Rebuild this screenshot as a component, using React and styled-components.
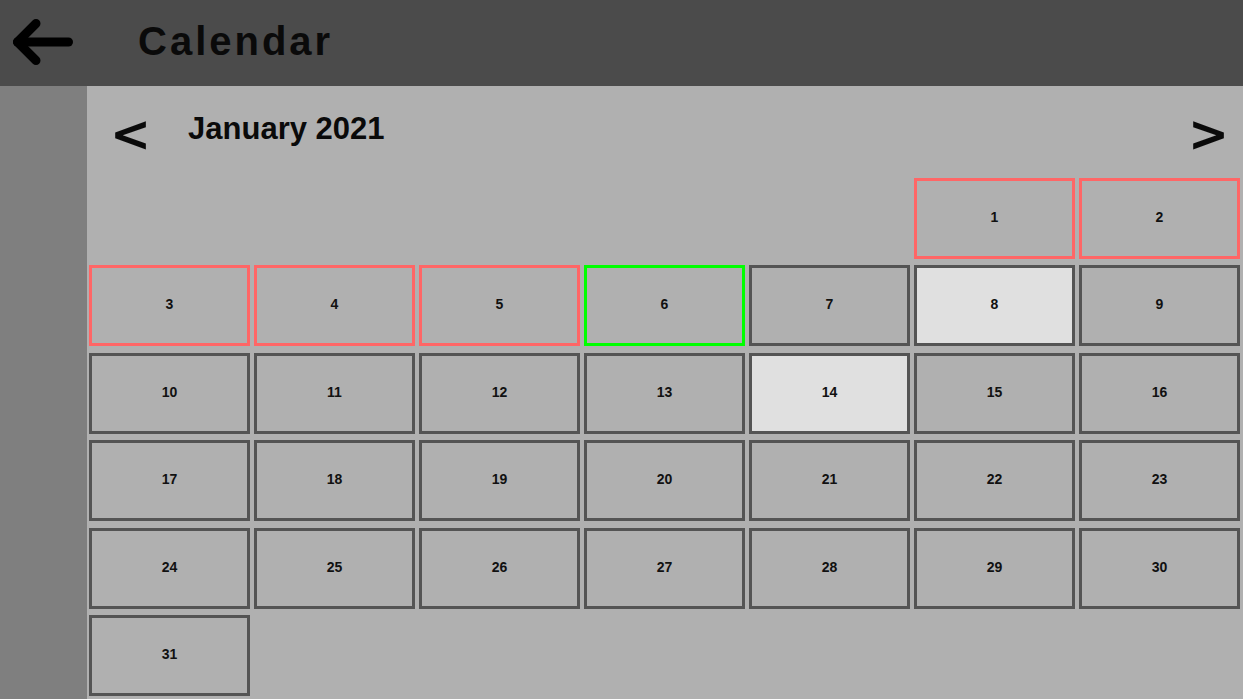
import React from 'react';
import styled, { createGlobalStyle } from 'styled-components';

const GlobalStyle = createGlobalStyle`
    html, body {
        margin: 0;
        padding: 0;
        height: 100%;
        overflow: hidden;
    }
    body {
        font-family: "Liberation Sans", Arial, sans-serif;
        color: #111;
    }
`;

const colors = {
    header: '#4b4b4b',
    sidebar: '#7f7f7f',
    main: '#b0b0b0',
    border: '#545454',
    busy: '#ff6666',
    today: '#00ff00',
    light: '#e0e0e0',
};

const Page = styled('div')`
    display: flex;
    flex-direction: column;
    width: 100vw;
    height: 100vh;
`;
const Header = styled('header')`
    display: flex;
    align-items: flex-start;
    height: 86px;
    flex-shrink: 0;
    background-color: ${colors.header};
`;
const BackButton = styled('button')`
    display: block;
    border: none;
    background: none;
    padding: 0;
    margin: 19px 0 0 13px;
    cursor: pointer;
    svg{
        display: block;
    }
`;
const Title = styled('h1')`
    margin: 21px 0 0 65px;
    font-size: 40px;
    line-height: 40px;
    font-weight: 700;
    letter-spacing: 3px;
    color: #0a0a0a;
`;
const Body = styled('div')`
    display: flex;
    flex: 1;
    min-height: 0;
`;
const Sidebar = styled('aside')`
    width: 87px;
    flex-shrink: 0;
    background-color: ${colors.sidebar};
`;
const Main = styled('main')`
    flex: 1;
    display: flex;
    flex-direction: column;
    background-color: ${colors.main};
`;
const MonthBar = styled('div')`
    display: flex;
    align-items: flex-start;
    height: 89px;
    padding: 0 14px 0 23px;
`;
const NavButton = styled('button')`
    border: none;
    background: none;
    padding: 0;
    margin-top: 24px;
    font-family: "DejaVu Sans", sans-serif;
    font-weight: 700;
    font-size: 49px;
    line-height: 49px;
    color: #0a0a0a;
    cursor: pointer;
    ${p => p.right && `margin-left: auto;`}
`;
const MonthTitle = styled('h2')`
    margin: 27px 0 0 37px;
    font-size: 31px;
    line-height: 31px;
    font-weight: 700;
    color: #0a0a0a;
`;
const Grid = styled('div')`
    display: grid;
    grid-template-columns: repeat(7, 1fr);
    grid-auto-rows: 81px;
    column-gap: 4px;
    row-gap: 6.4px;
    padding: 3px 3px 0 2px;
`;
const Day = styled('div')`
    display: flex;
    align-items: center;
    justify-content: center;
    box-sizing: border-box;
    padding-bottom: 3px;
    border: 3px solid ${p => p.variant === 'busy' ? colors.busy : p.variant === 'today' ? colors.today : colors.border};
    background-color: ${p => p.variant === 'light' ? colors.light : 'transparent'};
    font-size: 14px;
    font-weight: 700;
    color: #111;
    ${p => p.start && `grid-column-start: ${p.start};`}
`;

const variants = {
    1: 'busy', 2: 'busy', 3: 'busy', 4: 'busy', 5: 'busy',
    6: 'today',
    8: 'light', 14: 'light',
};

const BackArrow = () => (
    <svg width="60" height="46" viewBox="0 0 60 46">
        <g fill="none" stroke="#000" strokeWidth="9" strokeLinecap="round" strokeLinejoin="round">
            <path d="M55.5 23H4.5"/>
            <path d="M23 4.5 4.5 23 23 41.5"/>
        </g>
    </svg>
);

const days = Array.from({ length: 31 }, (_, i) => i + 1);

export default function App(){
    return(
        <Page>
            <GlobalStyle/>
            <Header>
                <BackButton aria-label="Back"><BackArrow/></BackButton>
                <Title>Calendar</Title>
            </Header>
            <Body>
                <Sidebar/>
                <Main>
                    <MonthBar>
                        <NavButton>&lt;</NavButton>
                        <MonthTitle>January 2021</MonthTitle>
                        <NavButton right>&gt;</NavButton>
                    </MonthBar>
                    <Grid>
                        {days.map(d => (
                            <Day key={d} start={d === 1 ? 6 : null} variant={variants[d]}>{d}</Day>
                        ))}
                    </Grid>
                </Main>
            </Body>
        </Page>
    );
}
